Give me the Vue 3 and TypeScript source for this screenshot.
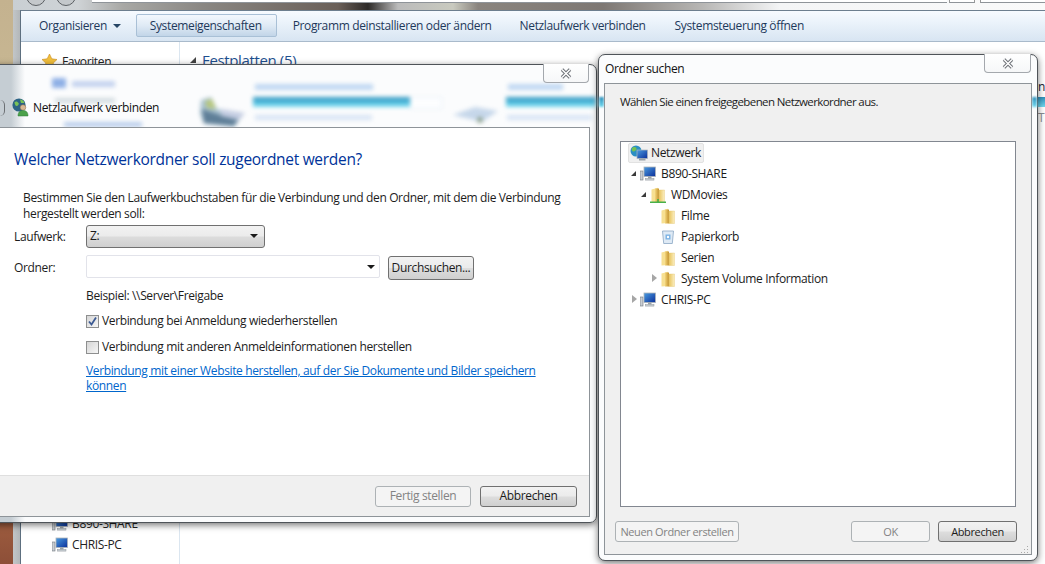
<script setup lang="ts">
import { computed } from 'vue'

const toolbar = ['Programm deinstallieren oder ändern', 'Netzlaufwerk verbinden', 'Systemsteuerung öffnen']
interface Row { label: string; kind: 'net' | 'pc' | 'share' | 'folder' | 'bin'; depth: number; arrow: '' | 'open' | 'closed' }
const rows: Row[] = [
  { label: 'B890-SHARE', kind: 'pc', depth: 0, arrow: 'open' },
  { label: 'WDMovies', kind: 'share', depth: 1, arrow: 'open' },
  { label: 'Filme', kind: 'folder', depth: 2, arrow: '' },
  { label: 'Papierkorb', kind: 'bin', depth: 2, arrow: '' },
  { label: 'Serien', kind: 'folder', depth: 2, arrow: '' },
  { label: 'System Volume Information', kind: 'folder', depth: 2, arrow: 'closed' },
  { label: 'CHRIS-PC', kind: 'pc', depth: 0, arrow: 'closed' }
]
const treeRows = computed(() => rows.map(r => ({ ...r, indent: r.depth * 10 + 2 + 'px' })))
</script>

<template>
  <div class="screen">
    <div class="bg-left"></div>
    <div class="bg-top">
      <i class="orb o1"></i><i class="orb o2"></i>
      <i class="strip s1"></i><i class="strip s2"></i><i class="strip s3"></i>
    </div>
    <div class="explorer">
      <div class="toolbar">
        <span class="tool">Organisieren <i class="caret"></i></span>
        <span class="tool active">Systemeigenschaften</span>
        <span v-for="t in toolbar" :key="t" class="tool">{{ t }}</span>
      </div>
      <div class="content">
        <div class="nav">
          <div class="fav">
            <svg width="17" height="17" viewBox="0 0 17 17"><path d="M8.5 1l2.3 4.8 5.2.7-3.8 3.6 1 5.2-4.7-2.6-4.7 2.6 1-5.2L1 6.5l5.2-.7z" fill="#f2bf3c" stroke="#c98c1d" stroke-width=".6"/></svg>
            <span>Favoriten</span>
          </div>
          <div class="nav-bottom">
            <div class="nav-item cut"><svg class="pc-icon" viewBox="0 0 16 16"><use href="#pc" /></svg><span>B890-SHARE</span></div>
            <div class="nav-item"><svg class="pc-icon" viewBox="0 0 16 16"><use href="#pc" /></svg><span>CHRIS-PC</span></div>
          </div>
        </div>
        <div class="main">
          <div class="group"><i class="tri-open"></i><span>Festplatten (5)</span></div>
        </div>
      </div>
    </div>

    <div class="peek">
      <span class="peek-n">n</span>
      <i class="peek-bar"></i>
      <span class="peek-t">T</span>
    </div>

    <svg width="0" height="0" class="defs">
      <defs>
        <linearGradient id="screen" x1="0" y1="0" x2="1" y2="1"><stop offset="0" stop-color="#4a9ce0"/><stop offset="1" stop-color="#0b2f9a"/></linearGradient>
        <linearGradient id="fold" x1="0" y1="0" x2="1" y2="0"><stop offset="0" stop-color="#e8c45e"/><stop offset="1" stop-color="#fbeec0"/></linearGradient>
        <linearGradient id="spine" x1="0" y1="0" x2="1" y2="0"><stop offset="0" stop-color="#f4d67c"/><stop offset="1" stop-color="#c2902c"/></linearGradient>
        <symbol id="pc" viewBox="0 0 16 16">
          <rect x="0" y="5" width="3" height="9" fill="#c9ced3" stroke="#70777d" stroke-width=".6"/>
          <rect x="4" y="1" width="11.5" height="9.5" fill="url(#screen)" stroke="#aeb5ba" stroke-width=".8"/>
          <rect x="8" y="10.5" width="3.5" height="2" fill="#9aa2a8"/>
          <rect x="5.5" y="12.5" width="8.5" height="1.6" fill="#c6ccd1" stroke="#7f868c" stroke-width=".4"/>
        </symbol>
        <symbol id="folder" viewBox="0 0 16 16">
          <path d="M1.5 2.500L8 .8V15L1.500 15.500z" fill="#f7e092"/>
          <rect x="5" y="1.500" width="4" height="14" fill="url(#spine)"/>
          <path d="M9 3h5.500v12.500H9z" fill="url(#fold)" stroke="#e2c470" stroke-width=".4"/>
        </symbol>
      </defs>
    </svg>

    <section class="dialog wizard">
      <div class="blurred">
        <div class="blur-nav b1"></div>
        <div class="blur-nav b1t"></div>
        <div class="blur-nav b2"></div>
        <div class="blur-nav b3"></div>
        <svg class="drives" width="620" height="62" viewBox="0 0 620 62">
          <path d="M212 35l10-3 6 12 26 6-9 12-30-3-4-10z" fill="#a9c2d0"/>
          <path d="M213 44l18 6 20 2-6 9-30-3z" fill="#5f7f98"/>
          <path d="M216 36l7-2 4 10-9-1z" fill="#b7c77e"/>
          <path d="M232 44l24 4-6 7-18-4z" fill="#c4cde2"/>
          <path d="M464 50l22-8 23 4-16 11z" fill="#c6d7ea"/>
          <circle cx="491" cy="55" r="3" fill="#8fa392"/>
        </svg>
        <div class="bar b-a"></div>
        <div class="faint"></div>
        <div class="bar b-b"></div>
        <div class="txt t-a"></div>
        <div class="txt t-a2"></div>
        <div class="txt t-b"></div>
        <div class="txt t-b2"></div>
      </div>
      <button class="close" type="button" aria-label="Schließen"><svg width="12" height="11" viewBox="0 0 12 11"><path d="M2 1.500l8 8M10 1.500l-8 8" stroke="#6a6e74" stroke-width="3.400"/><path d="M2 1.500l8 8M10 1.500l-8 8" stroke="#fff" stroke-width="1.500"/></svg></button>
      <div class="wiz-head">
        <span class="back-edge"></span>
        <svg class="wiz-icon" width="17" height="19" viewBox="0 0 17 19">
          <circle cx="7" cy="7" r="6.600" fill="#2c6385"/>
          <path d="M2.500 4c2-1 3-.5 4 1s-1 3-2 3-2-2-2-4zM8 1.500c2 0 4 1.500 4.500 3.500L9 5z" fill="#78c257"/>
          <circle cx="11" cy="9.500" r="2.800" fill="#d8b894" stroke="#8d6a4a" stroke-width=".5"/>
          <path d="M6 18c0-4 2-5.500 5-5.500s5 1.500 5 5.500z" fill="#4ba14a" stroke="#2c7a3a" stroke-width=".5"/>
        </svg>
        <span class="wiz-title">Netzlaufwerk verbinden</span>
      </div>
      <div class="wiz-body">
        <div class="wiz-inner">
          <h1>Welcher Netzwerkordner soll zugeordnet werden?</h1>
          <p class="intro">Bestimmen Sie den Laufwerkbuchstaben für die Verbindung und den Ordner, mit dem die Verbindung hergestellt werden soll:</p>
          <div class="form">
            <span class="lab">Laufwerk:</span>
            <div class="select"><span>Z:</span><i class="caret dark"></i></div>
            <span class="lab lab2">Ordner:</span>
            <div class="row-folder">
              <div class="combo"><i class="caret dark"></i></div>
              <span class="btn browse">Durchsuchen...</span>
            </div>
            <span></span>
            <div class="hint">Beispiel: \\Server\Freigabe</div>
            <span></span>
            <label class="check c1"><i class="box"><svg width="11" height="11" viewBox="0 0 11 11"><path d="M2 5.500l2.500 3L9 1.500" fill="none" stroke="#3c5a93" stroke-width="1.800"/></svg></i>Verbindung bei Anmeldung wiederherstellen</label>
            <span></span>
            <label class="check c2"><i class="box"></i>Verbindung mit anderen Anmeldeinformationen herstellen</label>
            <span></span>
            <a class="link">Verbindung mit einer Website herstellen, auf der Sie Dokumente und Bilder speichern können</a>
          </div>
        </div>
        <div class="wiz-foot">
          <span class="btn disabled finish">Fertig stellen</span>
          <span class="btn cancel">Abbrechen</span>
        </div>
      </div>
    </section>

    <section class="dialog browse-dlg">
      <i class="glow g-l"></i>
      <i class="glow g-r"></i>
      <button class="close" type="button" aria-label="Schließen"><svg width="12" height="11" viewBox="0 0 12 11"><path d="M2 1.500l8 8M10 1.500l-8 8" stroke="#6a6e74" stroke-width="3.400"/><path d="M2 1.500l8 8M10 1.500l-8 8" stroke="#fff" stroke-width="1.500"/></svg></button>
      <div class="brs-title">Ordner suchen</div>
      <div class="brs-body">
        <p class="brs-text">Wählen Sie einen freigegebenen Netzwerkordner aus.</p>
        <div class="tree">
          <div class="t-root">
            <svg width="18" height="17" viewBox="0 0 18 17">
              <circle cx="6" cy="6" r="5.500" fill="#2b8fc4"/>
              <path d="M2 3c2-1.500 4-1 4.500.5S4 7 3 6.500 1.500 4.500 2 3z" fill="#74c252"/>
              <rect x="7" y="5" width="10.500" height="8.500" fill="url(#screen)" stroke="#aeb5ba" stroke-width=".7"/>
              <rect x="9" y="13.500" width="6.500" height="2" fill="#9aa2a8"/>
            </svg>
            <span>Netzwerk</span>
          </div>
          <div v-for="r in treeRows" :key="r.label" class="t-row" :style="{ paddingLeft: r.indent }">
            <i class="arrow" :class="r.arrow"></i>
            <svg v-if="r.kind === 'pc'" class="t-icon" viewBox="0 0 16 16"><use href="#pc" /></svg>
            <svg v-else-if="r.kind === 'folder'" class="t-icon" viewBox="0 0 16 16"><use href="#folder" /></svg>
            <svg v-else-if="r.kind === 'share'" class="t-icon" viewBox="0 0 16 16"><use href="#folder" /><path d="M0 15.200h16M8 12v3" stroke="#48b048" stroke-width="1.600"/></svg>
            <svg v-else class="t-icon" viewBox="0 0 16 16"><path d="M2.500 2h11l-1.200 12.500H3.700z" fill="#dfeaf5" stroke="#8aa7c4" stroke-width=".8"/><rect x="5.500" y="5.500" width="5" height="5" fill="#7db3e4"/><circle cx="8" cy="8" r="1.200" fill="#fff"/></svg>
            <span class="t-label">{{ r.label }}</span>
          </div>
        </div>
        <div class="brs-foot">
          <span class="btn disabled new">Neuen Ordner erstellen</span>
          <span class="grow"></span>
          <span class="btn disabled ok">OK</span>
          <span class="btn cancel2">Abbrechen</span>
        </div>
        <svg class="grip" width="9" height="8" viewBox="0 0 9 8"><path d="M7 1h1v1H7zM7 4h1v1H7zM4 4h1v1H4zM7 7h1v1H7zM4 7h1v1H4zM1 7h1v1H1z" fill="#a9a9a9"/></svg>
      </div>
    </section>
  </div>
</template>

<style>
html, body { margin: 0; padding: 0; background: #fff; }
</style>

<style scoped>
.screen {
  position: relative;
  width: 1045px;
  height: 564px;
  overflow: hidden;
  background: #fff;
  font: 12px/16px "Open Sans", "Noto Sans", sans-serif;
  letter-spacing: -0.36px;
  color: #1c1c1c;
}
.defs { position: absolute; }
.bg-left {
  position: absolute; left: 0; top: 0; bottom: 0; width: 20px;
  background:
    linear-gradient(90deg, transparent 0, transparent 13px, #c2c6c8 13px, #b3b7b9 20px),
    linear-gradient(180deg, #c4b28f 0, #c9b994 120px, #c9b994 515px, #9c5b3e 524px, #8d4f38 564px);
}
.bg-top {
  position: absolute; left: 13px; right: 0; top: 0; height: 10px; overflow: hidden;
  background: linear-gradient(90deg, #c9cfd3 0, #cfd3d6 65px, #a8a8a5 110px, #8a8783 190px, #6a5f58 325px, #2d2a28 355px, #bbb 385px, #c9cabf 440px, #8a847e 465px, #7d7773 590px, #b8b7b5 690px, #f4f5f6 767px, #fafafa 100%);
}
.orb { position: absolute; top: -14px; width: 18px; height: 18px; border-radius: 50%; border: 1px solid #5c6064; background: #c4c8cb; }
.o1 { left: 13px; }
.o2 { left: 43px; }
.strip { position: absolute; top: 0; height: 2px; background: #fff; border-bottom: 1px solid #8f9499; }
.s1 { left: 79px; width: 855px; }
.s2 { left: 936px; width: 24px; border-left: 1px solid #999; border-right: 1px solid #999; }
.s3 { left: 967px; right: 0; border-left: 1px solid #999; }
.explorer {
  position: absolute; left: 20px; right: 0; top: 10px; bottom: 0;
  border-left: 1px solid #5d6f7f;
  border-top: 1px solid #6d7f8f;
  background: #fff;
  display: flex; flex-direction: column;
}
.toolbar {
  height: 30px;
  display: flex; align-items: center; gap: 2px;
  padding-left: 7px;
  background: linear-gradient(180deg, #f7fbff 0, #e7f0f9 50%, #d8e5f2 100%);
  border-bottom: 1px solid #a9bacb;
  color: #1e395b;
}
.tool { padding: 0 10px 0 11px; line-height: 22px; white-space: nowrap; }
.tool:nth-child(3) { margin-left: 3px; }
.tool:nth-child(n+4) { margin-left: 5px; }
.tool:nth-child(5) { margin-left: 6px; }
.active {
  height: 21px; margin-left: 3px; margin-top: -2px; padding: 0 14px 0 13px; line-height: 21px;
  border: 1px solid #a9c0d6; border-radius: 2px;
  background: linear-gradient(180deg, #f3f8fd 0, #dfeaf5 50%, #c2d5e8 100%);
}
.caret { display: inline-block; width: 0; height: 0; border: 4px solid transparent; border-top: 4px solid #274665; border-bottom: 0; margin-left: 3px; vertical-align: 2px; }
.caret.dark { border-top-color: #1a1a1a; margin: 0; }
.content { flex: 1; display: flex; min-height: 0; }
.nav { width: 158px; border-right: 1px solid #dbe6f0; position: relative; flex: none; }
.fav { display: flex; align-items: center; gap: 4px; padding: 11px 0 0 20px; color: #222; }
.nav-bottom { position: absolute; top: 471px; left: 31px; }
.nav-item { display: flex; align-items: center; gap: 4px; height: 21px; color: #222; white-space: nowrap; }
.pc-icon { width: 16px; height: 16px; flex: none; }
.main { flex: 1; padding: 8px 0 0 10px; }
.group { display: flex; align-items: center; gap: 6px; color: #1e4f8f; font-size: 15px; line-height: 20px; }
.tri-open { width: 0; height: 0; border-style: solid; border-width: 0 0 6px 6px; border-color: transparent transparent #444 transparent; }

.peek { position: absolute; left: 1038px; top: 0; color: #5a6572; }
.peek-n { position: absolute; left: 0; top: 79px; color: #223; }
.peek-bar { position: absolute; left: 0; top: 97px; width: 7px; height: 10px; background: linear-gradient(180deg, #2f90bb, #73daf0); }
.peek-t { position: absolute; left: 0; top: 110px; color: #8b8f94; }

.dialog {
  position: absolute;
  border: 1px solid #4f5459;
  border-radius: 7px;
  box-shadow: 0 2px 7px rgba(0,0,0,.55);
}
.close {
  position: absolute; top: -1px; height: 19px; padding: 0;
  border: 1px solid #a4a8ad; border-top: 0; border-radius: 0 0 4px 4px;
  background: linear-gradient(180deg, #fff 0, #f6f7f8 100%);
  display: flex; align-items: center; justify-content: center;
}
.wizard {
  left: -12px; top: 64px; width: 607px; height: 457px;
  background: linear-gradient(90deg, #c5cdd3 0, #c5cdd3 22px, #fbfcfd 36px, #fbfcfd 100%);
}
.wizard .close { right: 7px; width: 46px; }
.blurred { position: absolute; inset: 0 0 auto 0; height: 62px; overflow: hidden; filter: blur(2.2px); border-radius: 7px 7px 0 0; }
.blur-nav { position: absolute; border-radius: 1px; }
.b1 { left: 63px; top: 13px; width: 14px; height: 10px; background: #8fb0e6; }
.b1t { left: 83px; top: 16px; width: 43px; height: 6px; background: #c3d2ee; }
.b2 { left: 66px; top: 33px; width: 60px; height: 5px; background: #d3dce0; }
.b3 { left: 75px; top: 57px; width: 78px; height: 5px; background: #b9cdea; }
.drives { position: absolute; left: 0; top: 0; }
.bar { position: absolute; height: 10px; top: 32px; background: linear-gradient(180deg, #2f90bb 0, #4cb6d8 45%, #7fe0f4 100%); }
.b-a { left: 264px; width: 157px; }
.b-b { left: 517px; width: 100px; }
.faint { position: absolute; left: 421px; top: 32px; width: 30px; height: 10px; border: 1px solid #e6eff6; background: #fdfeff; }
.txt { position: absolute; height: 6px; }
.t-a { left: 266px; top: 19px; width: 118px; background: #c0d8f2; }
.t-b { left: 519px; top: 19px; width: 55px; background: #c0d8f2; }
.t-a2 { left: 266px; top: 50px; width: 117px; height: 5px; background: #d8e4f4; }
.t-b2 { left: 518px; top: 50px; width: 85px; height: 5px; background: #d8e4f4; }

.wiz-head { position: absolute; left: 0; top: 27px; height: 34px; display: flex; align-items: center; }
.back-edge { position: absolute; left: 11px; top: 8px; width: 4px; height: 16px; border-right: 1px solid #6b6f73; border-radius: 0 8px 8px 0; }
.wiz-icon { margin-left: 23px; margin-top: -3px; flex: none; }
.wiz-title { margin-left: 4px; margin-top: -2px; color: #111; white-space: nowrap; }
.wiz-body {
  position: absolute; left: 0; top: 62px; width: 600px; height: 388px;
  border: 1px solid #8e9499; border-left: 0; background: #fff;
  display: flex; flex-direction: column;
}
.wiz-inner { flex: 1; padding: 0 0 0 25px; position: relative; overflow: hidden; }
h1 { margin: 21px 0 0; font: 400 15.5px/20px "Open Sans", sans-serif; letter-spacing: -0.3px; color: #003399; }
.intro { margin: 21px 0 0 9px; line-height: 16px; width: 550px; }
.form { display: grid; grid-template-columns: 72px 1fr; margin-top: 3px; }
.lab { line-height: 24px; height: 23px; }
.lab2 { margin-top: 7px; line-height: 25px; height: 25px; }
.select {
  width: 179px; height: 23px; box-sizing: border-box; display: flex; justify-content: space-between; align-items: center;
  padding: 0 6px 2px 3px; border: 1px solid #707070; border-radius: 3px;
  background: linear-gradient(180deg, #f2f2f2 0, #ebebeb 48%, #dcdcdc 52%, #cfcfcf 100%);
}
.row-folder { display: flex; align-items: flex-start; margin-top: 7px; }
.combo {
  width: 294px; height: 23px; box-sizing: border-box; border: 1px solid #e2e3ea; border-radius: 2px; background: #fff;
  display: flex; align-items: center; justify-content: flex-end; padding-right: 4px;
}
.btn {
  display: inline-flex; align-items: center; justify-content: center; box-sizing: border-box;
  border: 1px solid #707070; border-radius: 3px; white-space: nowrap;
  background: linear-gradient(180deg, #f2f2f2 0, #ebebeb 48%, #dddddd 52%, #cfcfcf 100%);
}
.browse { width: 86px; height: 24px; margin: 1px 0 0 8px; }
.hint { margin-top: 8px; height: 16px; }
.check { display: flex; align-items: center; gap: 3px; height: 16px; }
.c1 { margin-top: 9px; }
.c2 { margin-top: 10px; }
.box {
  width: 13px; height: 13px; box-sizing: border-box; border: 1px solid #8e8f8f;
  background: linear-gradient(135deg, #d6d6d6, #f6f6f6); display: flex; align-items: center; justify-content: center;
}
.link { margin-top: 8px; width: 460px; color: #0066cc; text-decoration: underline; line-height: 15px; }
.wiz-foot {
  height: 41px; flex: none; box-sizing: border-box; background: #f0f0f0; border-top: 1px solid #dfdfdf;
  display: flex; justify-content: flex-end; align-items: center; gap: 9px; padding-right: 12px;
}
.disabled { border-color: #adb2b5; background: #f4f4f4; color: #838383; }
.finish { width: 96px; height: 21px; }
.cancel { width: 97px; height: 21px; }

.browse-dlg { left: 598px; top: 54px; width: 438px; height: 505px; background: #fbfcfd; }
.browse-dlg .close { right: 6px; width: 47px; }
.glow { position: absolute; top: 42px; height: 10px; width: 5px; background: linear-gradient(180deg, #2f90bb, #73daf0); filter: blur(1px); }
.g-l { left: 0; }
.g-r { right: 0; }
.brs-title { position: absolute; left: 6px; top: 6px; color: #111; }
.brs-body {
  position: absolute; left: 5px; top: 28px; width: 428px; height: 472px; box-sizing: border-box;
  border: 1px solid #8e9499; background: #f0f0f0; display: flex; flex-direction: column;
}
.brs-text { margin: 10px 0 0 15px; font-size: 11.5px; letter-spacing: -0.6px; }
.tree {
  margin: 31px 0 0 15px; width: 396px; height: 366px; flex: none; box-sizing: border-box;
  border: 1px solid #828790; background: #fff; padding: 1px 0 0 7px; color: #1a1a1a;
}
.t-root {
  display: flex; width: 76px; box-sizing: border-box; align-items: center; gap: 3px; height: 20px; padding-left: 1px;
  background: #f0f0f0; border: 1px solid #e2e2e2; border-radius: 2px;
}
.t-row { display: flex; align-items: center; height: 21px; white-space: nowrap; }
.arrow { width: 9px; height: 9px; flex: none; position: relative; margin-right: 1px; }
.arrow.open::after {
  content: ""; position: absolute; left: 1px; top: 2px; border-style: solid; border-width: 0 0 5px 5px;
  border-color: transparent transparent #3a3a3a transparent;
}
.arrow.closed::after {
  content: ""; position: absolute; left: 2px; top: 0; border-style: solid; border-width: 4.5px 0 4.5px 5px;
  border-color: transparent transparent transparent #a6a6a6;
}
.t-icon { width: 16px; height: 16px; flex: none; margin-right: 5px; }
.brs-foot { display: flex; align-items: center; margin: 14px 0 0 10px; width: 402px; gap: 8px; font-size: 11px; letter-spacing: -0.38px; }
.grow { flex: 1; }
.new { width: 124px; height: 21px; }
.ok { width: 79px; height: 21px; }
.cancel2 { width: 79px; height: 21px; }
.grip { position: absolute; right: 2px; bottom: 1px; }
</style>
